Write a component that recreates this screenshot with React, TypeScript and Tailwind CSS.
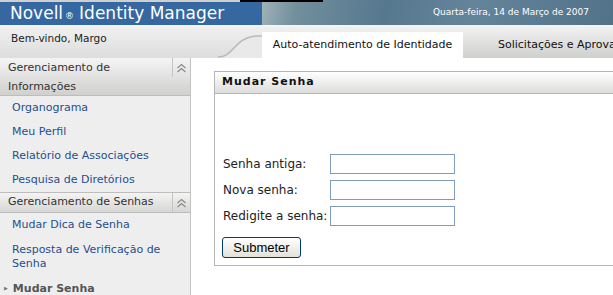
const Chevrons = () => (
  <svg width="11" height="10" viewBox="0 0 11 10" fill="none" stroke="#8a8a8a" strokeWidth="1.2">
    <path d="M1.5 5 L5.5 1.5 L9.5 5" />
    <path d="M1.5 9 L5.5 5.5 L9.5 9" />
  </svg>
);

const SideLink = ({ children }: { children: React.ReactNode }) => (
  <div className="h-[24px] pl-[12px] flex items-center text-[11px] text-[#1f4e8f]">{children}</div>
);

const FormRow = ({ label }: { label: string }) => (
  <div className="flex items-center h-[20px]">
    <span className="w-[108px] pl-px text-[12px] text-[#222]">{label}</span>
    <input type="password" className="w-[125px] h-[20px] border border-[#7f9db9] bg-white outline-none" />
  </div>
);

const App = () => {
  return (
    <div className="w-[613px] h-[295px] overflow-hidden bg-white font-['DejaVu_Sans',sans-serif]">
      <header className="relative flex h-[25px]">
        <div className="w-[262px] shrink-0 bg-[#3567a0] border-t-2 border-[#cfcfcf] pl-[10px] flex items-center text-white text-[17px] leading-none">
          Novell<span className="text-[9px] ml-[2px] mr-[5px] mt-[5px]">®</span>Identity Manager
        </div>
        <div className="flex-1 bg-[linear-gradient(100deg,#9fb3b8_0%,#718f9c_10%,#56788f_35%,#64849a_60%,#52728a_100%)] flex items-center justify-end pr-[24px] text-white text-[9px]">
          Quarta-feira, 14 de Março de 2007
        </div>
        <div className="absolute left-[240px] top-0 h-[2px] w-[83px] bg-black" />
      </header>
      <div className="h-[2px] bg-[#f4f4f4]" />

      <nav className="flex h-[31px] bg-gradient-to-b from-[#f0f0f0] to-[#dddddd]">
        <div className="relative w-[262px] shrink-0 pl-[11px] pt-[4px] text-[10.5px] text-[#222]">
          Bem-vindo, Margo
          <svg className="absolute right-0 bottom-0" width="50" height="26" viewBox="0 0 50 26">
            <path d="M0 26 L6 26 C22 26 22 7 44 5 L50 5 L50 26 Z" fill="#e9e9e9" />
            <path d="M6 25 C22 25 22 6 44 4 L50 4" fill="none" stroke="#b9b9b9" strokeWidth="1.5" />
          </svg>
        </div>
        <div className="flex flex-1 min-w-0 mt-[5px] overflow-hidden">
          <div className="w-[201px] shrink-0 bg-white flex items-center justify-center text-[11px] text-[#111]">
            Auto-atendimento de Identidade
          </div>
          <div className="flex-1 bg-gradient-to-b from-[#ececec] to-[#cfd0cd] flex items-center pl-[35px] text-[11px] text-[#111] whitespace-nowrap">
            Solicitações e Aprovações
          </div>
        </div>
      </nav>

      <div className="flex h-[237px]">
        <aside className="w-[191px] shrink-0 bg-[#eeeeee] border-r border-[#c2c2c2]">
          <div className="flex border-b border-[#bdbdbd] bg-gradient-to-b from-[#f4f4f4] to-[#d0d1ce] h-[38px]">
            <div className="flex-1 pl-[8px] text-[11px] leading-[19px] text-[#333]">
              Gerenciamento de
              <br />
              Informações
            </div>
            <div className="w-[18px] h-[19px] border-l border-[#c4c4c4] flex items-center justify-center">
              <Chevrons />
            </div>
          </div>
          <SideLink>Organograma</SideLink>
          <SideLink>Meu Perfil</SideLink>
          <SideLink>Relatório de Associações</SideLink>
          <SideLink>Pesquisa de Diretórios</SideLink>
          <div className="flex border-y border-[#bdbdbd] bg-gradient-to-b from-[#f4f4f4] to-[#d6d7d4] h-[21px]">
            <div className="flex-1 pl-[8px] flex items-center text-[11px] text-[#333]">Gerenciamento de Senhas</div>
            <div className="w-[18px] border-l border-[#c4c4c4] flex items-center justify-center">
              <Chevrons />
            </div>
          </div>
          <SideLink>Mudar Dica de Senha</SideLink>
          <div className="pl-[12px] py-[6px] text-[11px] leading-[14px] text-[#1f4e8f]">
            Resposta de Verificação de
            <br />
            Senha
          </div>
          <div className="h-[24px] pl-[4px] flex items-center gap-[5px] text-[11px] font-bold text-[#555]">
            <span className="text-[5px] text-[#777]">▶</span>
            Mudar Senha
          </div>
        </aside>

        <main className="flex-1 pl-[23px] pt-[13px] overflow-hidden">
          <div className="w-[420px] h-[195px] border border-[#b5b5b5]">
            <div className="h-[22px] border-b border-[#b5b5b5] bg-gradient-to-b from-white to-[#dcdddb] pl-[7px] flex items-center text-[11px] font-bold tracking-[1px] text-[#111]">
              Mudar Senha
            </div>
            <div className="pl-[7px] pt-[60px] flex flex-col">
              <div className="flex flex-col gap-[6px]">
                <FormRow label="Senha antiga:" />
                <FormRow label="Nova senha:" />
                <FormRow label="Redigite a senha:" />
              </div>
              <button className="mt-[11px] w-[79px] h-[21px] rounded-[3px] border border-[#003c74] bg-gradient-to-b from-white to-[#e3e1d8] font-['Liberation_Sans',sans-serif] text-[13px] text-black">
                Submeter
              </button>
            </div>
          </div>
        </main>
      </div>
    </div>
  );
};

export default App;
